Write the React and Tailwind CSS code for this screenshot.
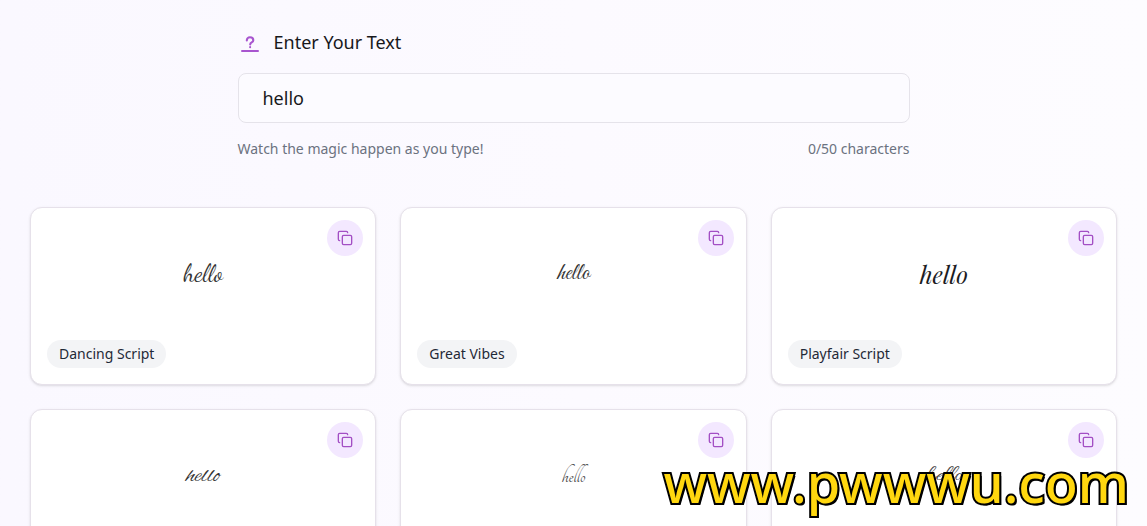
import { useState } from "react";

const fonts = [
  { name: "Dancing Script", sample: "font-['Dancing_Script','Liberation_Serif',serif]", ink: "text-[#333]" },
  { name: "Great Vibes", sample: "font-['Great_Vibes','Liberation_Serif',serif]", ink: "text-[#333]" },
  { name: "Playfair Script", sample: "italic font-['Playfair_Display','Liberation_Serif',serif]", ink: "text-[#1c1c1f]" },
  { name: "Alex Brush", sample: "font-['Alex_Brush','Liberation_Serif',serif]", ink: "text-[#333]" },
  { name: "Tangerine", sample: "font-['Tangerine','Liberation_Serif',serif]", ink: "text-[#444]" },
  { name: "Allura", sample: "font-['Allura','Pinyon_Script','Liberation_Serif',serif]", ink: "text-[#444]" },
];

function PromptIcon() {
  return (
    <svg width="20" height="22" viewBox="0 0 20 22" fill="none" stroke="#a855cf" strokeLinecap="round" strokeLinejoin="round" aria-hidden="true">
      <path d="M6.8 9.4C6.8 7.5 8 6.3 10 6.3s3.3 1.2 3.3 2.9c0 2.3-3.1 2.2-3.1 4.2" strokeWidth="2.1" />
      <path d="M10.1 16v.2" strokeWidth="2" />
      <path d="M2 20h16" strokeWidth="2" />
    </svg>
  );
}

function CopyIcon() {
  return (
    <svg width="16" height="16" viewBox="0 0 24 24" fill="none" stroke="currentColor" strokeWidth="2" strokeLinecap="round" strokeLinejoin="round" aria-hidden="true">
      <rect x="8" y="8" width="14" height="14" rx="2" />
      <path d="M4 16c-1.1 0-2-.9-2-2V4c0-1.1.9-2 2-2h10c1.1 0 2 .9 2 2" />
    </svg>
  );
}

function FontCard({ font, text }) {
  return (
    <article className="relative flex flex-col rounded-xl border border-[#e6e1ea] bg-white p-4 shadow-sm">
      <button
        type="button"
        aria-label={`Copy ${font.name} text`}
        className="absolute top-3 right-3 flex size-9 items-center justify-center rounded-full bg-[#f3e8ff] text-[#a34fc4]"
      >
        <CopyIcon />
      </button>
      <div className="flex h-29 items-center justify-center pb-4">
        <p className={`text-2xl font-normal ${font.sample} ${font.ink}`}>{text}</p>
      </div>
      <span className="self-start rounded-full bg-[#f3f4f6] px-3 py-1 text-sm text-[#1f2937]">{font.name}</span>
    </article>
  );
}

export default function App() {
  const [text, setText] = useState("hello");

  return (
    <div className="relative h-screen overflow-hidden bg-linear-to-r from-[#faf8ff] via-[#fcfaff] to-[#fdfcff] font-['Noto_Sans',sans-serif] text-[#18181b]">
      <main className="px-[30px] pt-7">
        <section className="mx-auto max-w-2xl">
          <label htmlFor="source-text" className="flex items-center gap-3.5 pl-0.5 text-lg">
            <PromptIcon />
            Enter Your Text
          </label>
          <input
            id="source-text"
            type="text"
            maxLength={50}
            value={text}
            onChange={(e) => setText(e.target.value)}
            className="mt-[17px] h-[50px] w-full rounded-lg border border-[#e5e3ea] bg-[#fcfbff] px-6 text-lg outline-none"
          />
          <div className="mt-4 flex justify-between text-sm text-[#6b7280]">
            <p>Watch the magic happen as you type!</p>
            <p>0/50 characters</p>
          </div>
        </section>
        <section className="mt-12 grid grid-cols-3 gap-6">
          {fonts.map((font) => (
            <FontCard key={font.name} font={font} text={text} />
          ))}
        </section>
      </main>
      <p className="absolute right-[18px] bottom-3 text-[54px] leading-[64px] font-medium text-[#ffd70f] [-webkit-text-stroke:4px_#000] [paint-order:stroke_fill] [text-shadow:2px_2px_0_#000]">
        www.pwwwu.com
      </p>
    </div>
  );
}
